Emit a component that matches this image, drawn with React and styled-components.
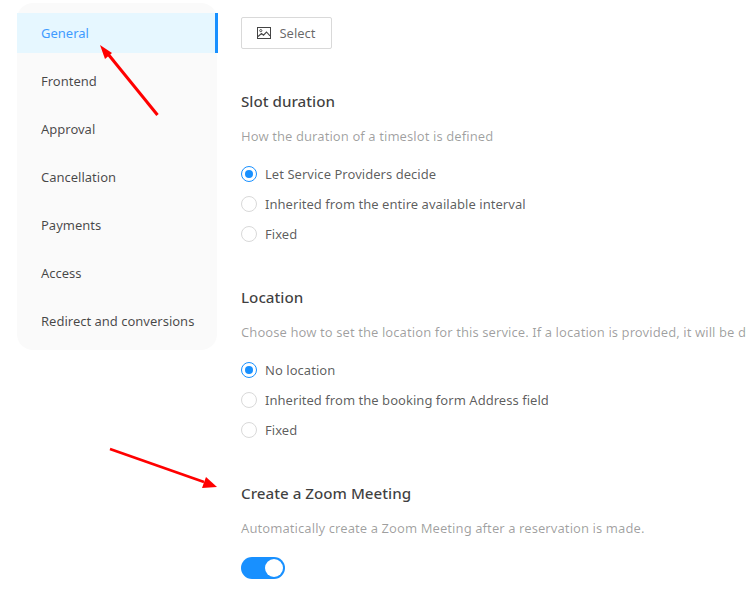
import React from "react";
import styled, { createGlobalStyle } from "styled-components";

const GlobalStyle = createGlobalStyle`
  html, body {
    margin: 0;
    padding: 0;
    background: #fff;
    overflow: hidden;
    font-family: "Noto Sans", "Open Sans", "Liberation Sans", sans-serif;
    font-size: 13px;
  }
`;

const Page = styled.div`
  position: relative;
  width: 747px;
  height: 599px;
  overflow: hidden;
  display: flex;
  align-items: flex-start;
  padding: 3px 0 0 17px;
  box-sizing: border-box;
  gap: 24px;
`;

const Sidebar = styled.nav`
  width: 200px;
  flex: none;
  padding: 10px 0 9px;
  box-sizing: border-box;
  background: #fafafa;
  border-radius: 16px;
  display: flex;
  flex-direction: column;
  gap: 8px;
`;

const MenuItem = styled.div`
  height: 40px;
  line-height: 40px;
  padding-left: 24px;
  white-space: nowrap;
  color: ${({ $active }) => ($active ? "#3f9bff" : "rgba(0, 0, 0, 0.72)")};
  background: ${({ $active }) => ($active ? "#e6f7ff" : "transparent")};
  border-right: ${({ $active }) => ($active ? "3px solid #1890ff" : "none")};
  margin-right: ${({ $active }) => ($active ? "-1px" : "0")};
`;

const Main = styled.main`
  flex: 1;
  min-width: 0;
  padding-top: 14px;
`;

const SelectButton = styled.button`
  width: 91px;
  height: 32px;
  display: flex;
  align-items: center;
  justify-content: center;
  gap: 8px;
  padding: 0;
  background: #fff;
  border: 1px solid #d9d9d9;
  border-radius: 2px;
  color: rgba(0, 0, 0, 0.6);
  font: inherit;
`;

const Section = styled.section`
  margin-top: ${({ $top }) => $top}px;
`;

const Title = styled.h3`
  margin: 0;
  font-size: 15.2px;
  line-height: 20px;
  font-weight: 500;
  color: rgba(0, 0, 0, 0.76);
`;

const Hint = styled.p`
  margin: 15px 0 0;
  line-height: 20px;
  letter-spacing: 0.08px;
  color: rgba(0, 0, 0, 0.38);
  white-space: nowrap;
`;

const RadioGroup = styled.div`
  margin-top: 18px;
  display: flex;
  flex-direction: column;
  gap: 10px;
`;

const RadioRow = styled.label`
  display: flex;
  align-items: center;
  gap: 8px;
  height: 20px;
  letter-spacing: 0.04px;
  color: rgba(0, 0, 0, 0.65);
`;

const RadioDot = styled.span`
  width: 16px;
  height: 16px;
  box-sizing: border-box;
  border-radius: 50%;
  background: #fff;
  border: 1px solid ${({ $on }) => ($on ? "#1890ff" : "#d9d9d9")};
  display: flex;
  align-items: center;
  justify-content: center;

  &::after {
    content: "";
    display: ${({ $on }) => ($on ? "block" : "none")};
    width: 8px;
    height: 8px;
    border-radius: 50%;
    background: #1890ff;
  }
`;

const Toggle = styled.div`
  margin-top: 19px;
  width: 44px;
  height: 22px;
  border-radius: 11px;
  background: #1890ff;
  display: flex;
  align-items: center;
  justify-content: flex-end;
  padding-right: 2px;
  box-sizing: border-box;

  &::after {
    content: "";
    width: 18px;
    height: 18px;
    border-radius: 50%;
    background: #fff;
  }
`;

const ArrowLayer = styled.svg`
  position: absolute;
  left: 0;
  top: 0;
  pointer-events: none;
`;

const menu = ["General", "Frontend", "Approval", "Cancellation", "Payments", "Access", "Redirect and conversions"];

const PictureIcon = () => (
  <svg width="14" height="14" viewBox="0 0 14 14" fill="none">
    <rect x="0.5" y="1.5" width="13" height="11" stroke="#444" strokeWidth="1" />
    <circle cx="3.8" cy="4.6" r="1.1" stroke="#444" strokeWidth="0.9" />
    <path d="M1 10.5 L4.5 7.5 L6.5 9.2 L9.5 6 L13 9.8" stroke="#444" strokeWidth="1.1" />
  </svg>
);

const Radios = ({ items }) => (
  <RadioGroup>
    {items.map((text, i) => (
      <RadioRow key={text}>
        <RadioDot $on={i === 0} />
        {text}
      </RadioRow>
    ))}
  </RadioGroup>
);

const App = () => {
  return (
    <Page>
      <GlobalStyle />
      <Sidebar>
        {menu.map((name, i) => (
          <MenuItem key={name} $active={i === 0}>
            {name}
          </MenuItem>
        ))}
      </Sidebar>
      <Main>
        <SelectButton>
          <PictureIcon />
          Select
        </SelectButton>
        <Section $top={42}>
          <Title>Slot duration</Title>
          <Hint>How the duration of a timeslot is defined</Hint>
          <Radios items={["Let Service Providers decide", "Inherited from the entire available interval", "Fixed"]} />
        </Section>
        <Section $top={43}>
          <Title>Location</Title>
          <Hint>Choose how to set the location for this service. If a location is provided, it will be d</Hint>
          <Radios items={["No location", "Inherited from the booking form Address field", "Fixed"]} />
        </Section>
        <Section $top={43}>
          <Title>Create a Zoom Meeting</Title>
          <Hint>Automatically create a Zoom Meeting after a reservation is made.</Hint>
          <Toggle />
        </Section>
      </Main>
      <ArrowLayer width="747" height="599" viewBox="0 0 747 599">
        <path d="M157.5 115 L108 54" stroke="#f00" strokeWidth="3" />
        <polygon points="100,45 112,53 105,59" fill="#f00" />
        <path d="M110 449 L204 482" stroke="#f00" strokeWidth="2.6" />
        <polygon points="217,487 202,488 206,477" fill="#f00" />
      </ArrowLayer>
    </Page>
  );
};

export default App;
